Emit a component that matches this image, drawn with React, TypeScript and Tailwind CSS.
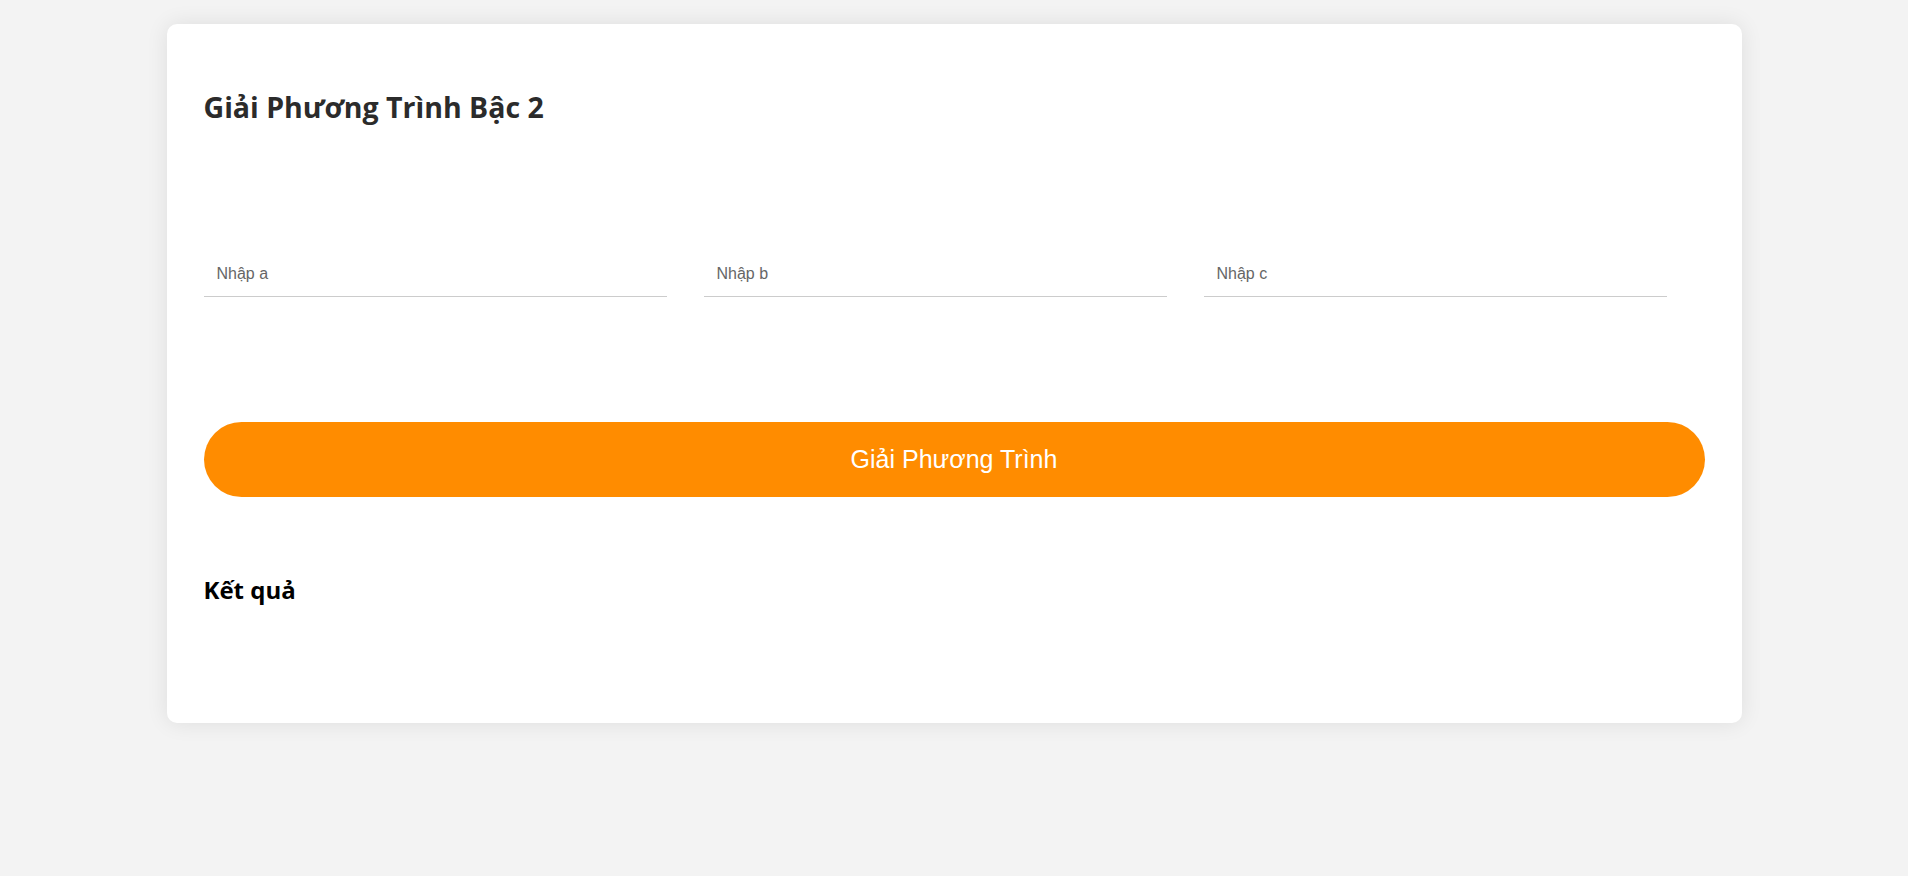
export default function App() {
  return (
    <div className="min-h-screen bg-[#f3f3f3] pt-[24px] pb-[152px]">
      <div className="mx-auto w-[1575px] h-[699px] rounded-[10px] bg-white px-[37px] pt-[63px] shadow-[0_0_22px_rgba(0,0,0,0.09)]">
        {/* TITLE */}
        <h1 className="font-['Open_Sans',sans-serif] text-[28.5px] font-bold leading-[40px] text-[#2b2b2b]">
          Giải Phương Trình Bậc 2
        </h1>

        {/* INPUTS */}
        <div className="mt-[125px] flex gap-[37px]">
          <input
            placeholder="Nhập a"
            className="h-[45px] w-[463px] border-b border-[#cccccc] px-[13px] font-['Liberation_Sans',sans-serif] text-[16px] text-[#333] outline-none placeholder:text-[#666]"
          />
          <input
            placeholder="Nhập b"
            className="h-[45px] w-[463px] border-b border-[#cccccc] px-[13px] font-['Liberation_Sans',sans-serif] text-[16px] text-[#333] outline-none placeholder:text-[#666]"
          />
          <input
            placeholder="Nhập c"
            className="h-[45px] w-[463px] border-b border-[#cccccc] px-[13px] font-['Liberation_Sans',sans-serif] text-[16px] text-[#333] outline-none placeholder:text-[#666]"
          />
        </div>

        {/* BUTTON */}
        <button className="mt-[125px] flex h-[75px] w-full items-center justify-center rounded-full bg-[#ff8c00] font-['Liberation_Sans',sans-serif] text-[25px] text-white">
          Giải Phương Trình
        </button>

        {/* RESULT */}
        <h2 className="mt-[78px] font-['Open_Sans',sans-serif] text-[24px] font-bold leading-[30px] text-black">
          Kết quả
        </h2>
      </div>
    </div>
  );
}
